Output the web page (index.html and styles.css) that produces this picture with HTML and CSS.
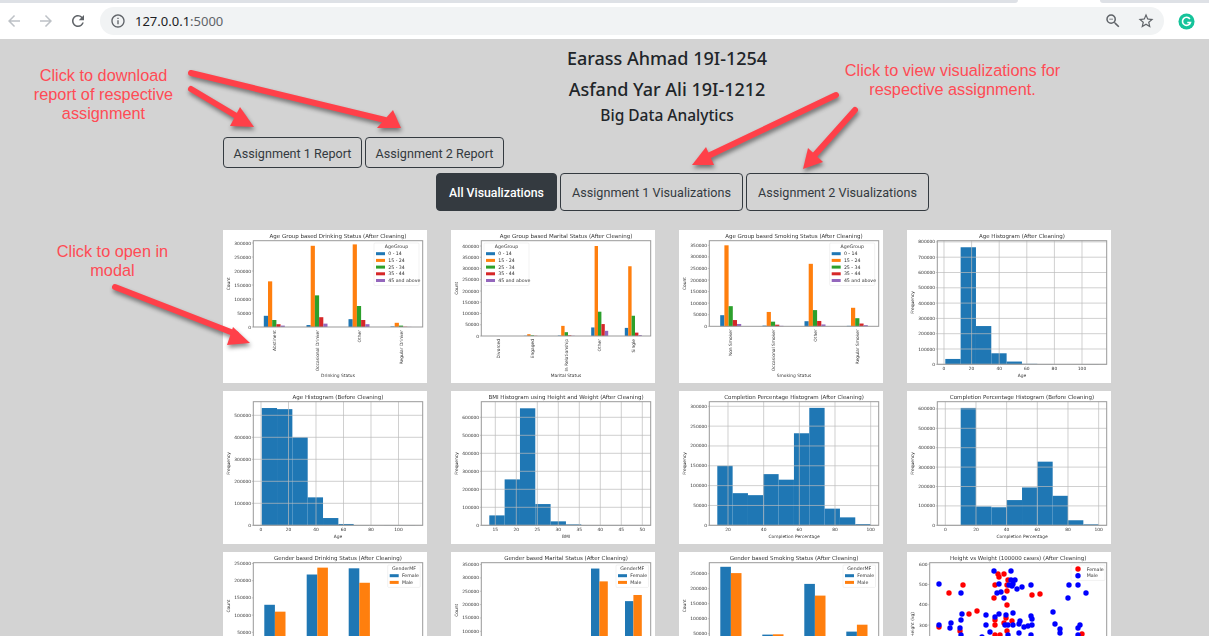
FILE: index.html
```html
<!DOCTYPE html>
<html lang="en">
<head>
    <meta charset="UTF-8">
    <meta name="viewport" content="width=device-width, initial-scale=1.0">
    <title>Big Data Analytics</title>
    <link rel="stylesheet" href="styles.css">
</head>
<body>
    <div class="tab-strip">
        <div class="tab-gap"></div>
        <div class="tab-open"></div>
        <div class="tab-rest"></div>
    </div>
    <div class="toolbar">
        <svg class="tool-icon faded" viewBox="0 0 24 24"><path d="M20 11H7.83l5.59-5.59L12 4l-8 8 8 8 1.41-1.41L7.83 13H20v-2z"/></svg>
        <svg class="tool-icon faded" viewBox="0 0 24 24"><path d="M4 11h12.17l-5.59-5.59L12 4l8 8-8 8-1.41-1.41L16.17 13H4v-2z"/></svg>
        <svg class="tool-icon" viewBox="0 0 24 24"><path d="M17.65 6.35A7.958 7.958 0 0 0 12 4c-4.42 0-7.99 3.58-7.99 8s3.57 8 7.99 8c3.73 0 6.84-2.55 7.73-6h-2.08A5.99 5.99 0 0 1 12 18c-3.31 0-6-2.69-6-6s2.69-6 6-6c1.66 0 3.14.69 4.22 1.78L13 11h7V4l-2.35 2.35z"/></svg>
        <div class="omnibox">
            <svg class="info-icon" viewBox="0 0 24 24"><path d="M11 7h2v2h-2zm0 4h2v6h-2zm1-9C6.48 2 2 6.48 2 12s4.48 10 10 10 10-4.48 10-10S17.52 2 12 2zm0 18c-4.41 0-8-3.59-8-8s3.59-8 8-8 8 3.59 8 8-3.59 8-8 8z"/></svg>
            <span class="url">127.0.0.1<span class="url-port">:5000</span></span>
            <svg class="tool-icon" viewBox="0 0 24 24"><path d="M15.5 14h-.79l-.28-.27A6.471 6.471 0 0 0 16 9.5 6.5 6.5 0 1 0 9.5 16c1.61 0 3.09-.59 4.23-1.57l.27.28v.79l5 4.99L20.49 19l-4.99-5zm-6 0C7.01 14 5 11.99 5 9.5S7.01 5 9.5 5 14 7.01 14 9.5 11.99 14 9.5 14zM7 9h5v1H7z"/></svg>
            <svg class="tool-icon" viewBox="0 0 24 24"><path d="M22 9.24l-7.19-.62L12 2 9.19 8.63 2 9.24l5.46 4.73L5.82 21 12 17.27 18.18 21l-1.63-7.03L22 9.24zM12 15.4l-3.76 2.27 1-4.28-3.32-2.88 4.38-.38L12 6.1l1.71 4.04 4.38.38-3.32 2.88 1 4.28L12 15.4z"/></svg>
        </div>
        <svg class="grammarly" viewBox="0 0 18 18">
            <circle cx="9" cy="9" r="8.5" fill="#15c39a"/>
            <path d="M12.6 6.4A4.3 4.3 0 1 0 13.2 10H9.8" fill="none" stroke="#fff" stroke-width="1.7"/>
        </svg>
    </div>

    <div class="page">
        <h2 class="name">Earass Ahmad 19I-1254</h2>
        <h2 class="name">Asfand Yar Ali 19I-1212</h2>
        <h3 class="course">Big Data Analytics</h3>

        <div class="btn-row">
            <button class="btn">Assignment 1 Report</button>
            <button class="btn">Assignment 2 Report</button>
        </div>
        <div class="btn-row tabs">
            <button class="btn tab active">All Visualizations</button>
            <button class="btn tab">Assignment 1 Visualizations</button>
            <button class="btn tab">Assignment 2 Visualizations</button>
        </div>

        <div id="gallery" class="gallery"></div>
    </div>

    <!-- annotations drawn on top of the screenshot -->
    <div class="note note-download">Click to download<br>report of respective<br>assignment</div>
    <div class="note note-view">Click to view visualizations for<br>respective assignment.</div>
    <div class="note note-modal">Click to open in<br>modal</div>
    <svg class="arrows" viewBox="0 0 1209 636">
        <path d="M191 73 L385 120" class="shaft"/>
        <polygon points="401,128 393,110 377,128"/>
        <path d="M191 89 L238 117" class="shaft"/>
        <polygon points="254,127 240,107 230,126"/>
        <path d="M836 95 L706 157" class="shaft"/>
        <polygon points="692,165 706,147 714,165"/>
        <path d="M855 110 L813 157" class="shaft"/>
        <polygon points="803,169 808,148 823,162"/>
        <path d="M115 287 L236 334" class="shaft"/>
        <polygon points="250,343 233,327 227,345"/>
    </svg>

    <script src="charts.js"></script>
</body>
</html>
```
FILE: styles.css
```css
html, body {
    margin: 0;
    height: 100%;
    overflow: hidden;
}
body {
    position: relative;
    background-color: #d3d3d3;
    font-family: "Noto Sans", sans-serif;
    color: #212529;
}

/* browser chrome */
.tab-strip {
    display: flex;
    height: 3px;
    background-color: #fff;
}
.tab-gap {
    width: 1018px;
    background-color: #dee1e6;
    border-bottom-right-radius: 3px;
}
.tab-open {
    width: 82px;
}
.tab-rest {
    flex: 1;
    background-color: #dee1e6;
    border-bottom-left-radius: 3px;
}
.toolbar {
    display: flex;
    align-items: center;
    gap: 14px;
    height: 36px;
    padding-left: 5px;
    background-color: #fff;
}
.tool-icon {
    width: 18px;
    height: 18px;
    fill: #5f6368;
    flex: none;
}
.tool-icon.faded {
    fill: #bdc1c6;
}
.omnibox {
    display: flex;
    align-items: center;
    gap: 15px;
    width: 1064px;
    height: 28px;
    margin-left: -1px;
    padding: 0 9px 0 10px;
    box-sizing: border-box;
    background-color: #f1f3f4;
    border-radius: 14px;
}
.info-icon {
    width: 16px;
    height: 16px;
    fill: #5f6368;
    flex: none;
    margin-right: -6px;
}
.url {
    flex: 1;
    font-size: 13px;
    color: #202124;
}
.url-port {
    color: #5f6368;
}
.grammarly {
    width: 17px;
    height: 17px;
    margin-left: 0;
    flex: none;
}

/* page */
.page {
    width: 888px;
    margin-left: 223px;
    padding-top: 4px;
}
.name {
    margin: 0;
    font-size: 18px;
    font-weight: 500;
    line-height: 31px;
    text-align: center;
}
.course {
    margin: 0;
    font-size: 15.5px;
    font-weight: 500;
    line-height: 20px;
    text-align: center;
}
.btn-row {
    display: flex;
    gap: 3px;
    margin-top: 12px;
}
.btn-row.tabs {
    margin-top: 5px;
    padding-left: 213px;
}
.btn {
    height: 31px;
    width: 139px;
    padding: 1px 0 0;
    font-family: Roboto, sans-serif;
    font-size: 12.6px;
    color: #343a40;
    background-color: transparent;
    border: 1px solid #343a40;
    border-radius: 4px;
}
.tab {
    height: 38px;
    width: 183px;
}
.tab.active {
    width: 121px;
    font-size: 12.3px;
    font-weight: 500;
    color: #fff;
    background-color: #343a40;
}
.gallery {
    display: grid;
    grid-template-columns: repeat(4, 204px);
    grid-auto-rows: 153px;
    gap: 8px 24px;
    margin-top: 19px;
}
.plot {
    background-color: #fff;
}
.plot svg {
    display: block;
    width: 204px;
    height: 153px;
    filter: blur(0.5px);
}
.plot text {
    font-family: "DejaVu Sans", sans-serif;
    font-size: 4.4px;
    fill: #333;
}
.plot .plot-title {
    font-size: 5.5px;
}
.plot .legend-text {
    font-size: 4.7px;
}
.plot .frame {
    fill: none;
    stroke: #999;
    stroke-width: 1;
}
.plot .grid {
    stroke: #bbb;
    stroke-width: 0.7;
}
.plot .tick {
    stroke: #777;
    stroke-width: 0.4;
}
.plot .legend-box {
    fill: #fff;
    stroke: #e4e4e4;
    stroke-width: 0.5;
}

/* annotations */
.note {
    position: absolute;
    font-family: "Liberation Sans", Arial, sans-serif;
    font-size: 16.3px;
    line-height: 19px;
    color: #ff4b55;
    text-align: center;
}
.note-download {
    left: 3.5px;
    top: 66px;
    width: 200px;
}
.note-view {
    left: 802.5px;
    top: 61px;
    width: 300px;
}
.note-modal {
    left: 32.5px;
    top: 242px;
    width: 160px;
}
.arrows {
    position: absolute;
    left: 0;
    top: 0;
    width: 1209px;
    height: 636px;
    fill: #ff4049;
    filter: drop-shadow(1px 3px 2px rgba(0, 0, 0, 0.45));
    pointer-events: none;
}
.shaft {
    fill: none;
    stroke: #ff4049;
    stroke-width: 6;
    stroke-linecap: round;
}
```
FILE: charts.js
```js
const BLUE = "#1f77b4";
const ORANGE = "#ff7f0e";
const SERIES = [BLUE, ORANGE, "#2ca02c", "#d62728", "#9467bd"];
const AGE_LEGEND = ["0 - 14", "15 - 24", "25 - 34", "35 - 44", "45 and above"];
const GENDER_LEGEND = ["Female", "Male"];

// values are in thousands, scale is pixels per 100k
function grouped(title, xlabel, labels, opts) {
    return Object.assign({ title, xlabel, ylabel: "Count", labels, left: 30.3 }, opts);
}

function hist(title, xlabel, opts) {
    return Object.assign({ title, xlabel, ylabel: "Frequency", left: 30.3, bottom: 134.3, grid: true }, opts);
}

const charts = [
    grouped("Age Group based Drinking Status (After Cleaning)", "Drinking Status",
        ["Abstinent", "Occasional Drinker", "Other", "Regular Drinker"], {
        bottom: 97, scale: 28, step: 50, max: 300, centers: [51.3, 94, 136, 178], barW: 4.2,
        groups: [[40, 163, 25, 10, 5], [7, 290, 113, 35, 12], [28, 295, 75, 25, 10], [2, 15, 5, 1, 0.5]],
        legend: { x: 151, title: "AgeGroup", items: AGE_LEGEND }
    }),
    grouped("Age Group based Marital Status (After Cleaning)", "Marital Status",
        ["Divorced", "Engaged", "In Relationship", "Other", "Single"], {
        bottom: 106, scale: 22.5, step: 50, max: 400, centers: [47.3, 81.3, 115.3, 148.7, 182.3], barW: 3.4,
        groups: [[0, 0, 0, 0, 0], [1, 8, 3, 1, 0], [2, 45, 17, 3, 1], [38, 400, 108, 53, 23], [36, 310, 90, 15, 4]],
        legend: { x: 33, title: "AgeGroup", items: AGE_LEGEND }
    }),
    grouped("Age Group based Smoking Status (After Cleaning)", "Smoking Status",
        ["Non Smoker", "Occasional Smoker", "Other", "Regular Smoker"], {
        bottom: 96.3, scale: 23.14, step: 50, max: 350, centers: [51.7, 94, 136, 178.3], barW: 4.2,
        groups: [[48, 350, 87, 27, 10], [3, 62, 20, 7, 2], [22, 270, 70, 23, 8], [2, 80, 35, 12, 5]],
        legend: { x: 150.7, title: "AgeGroup", items: AGE_LEGEND }
    }),
    hist("Age Histogram (After Cleaning)", "Age", {
        scale: 15.3, step: 100, max: 800, start: 38.3, bins: [35, 765, 250, 72, 18, 3, 1, 0, 0, 1],
        xticks: { x0: 37, dx: 27.6, first: 0, inc: 20, count: 6 }
    }),
    hist("Age Histogram (Before Cleaning)", "Age", {
        scale: 22, step: 100, max: 500, start: 38.7, bins: [533, 528, 400, 127, 33, 6, 1, 0, 1, 1],
        xticks: { x0: 38, dx: 27.5, first: 0, inc: 20, count: 6 }
    }),
    hist("BMI Histogram using Height and Weight (After Cleaning)", "BMI", {
        scale: 18, step: 100, max: 600, start: 38.3, bins: [55, 255, 650, 118, 22, 5, 1, 1, 1, 0.5],
        xticks: { x0: 44.3, dx: 21, first: 15, inc: 5, count: 8 }
    }),
    hist("Completion Percentage Histogram (After Cleaning)", "Completion Percentage", {
        scale: 39.67, step: 50, max: 300, start: 38.3, bins: [150, 81, 76, 129, 115, 232, 296, 42, 20, 3],
        xticks: { x0: 49, dx: 35.67, first: 20, inc: 20, count: 5 }
    }),
    hist("Completion Percentage Histogram (Before Cleaning)", "Completion Percentage", {
        scale: 19.4, step: 100, max: 600, start: 53.7, bins: [605, 97, 93, 130, 195, 328, 152, 26, 5],
        xticks: { x0: 38.3, dx: 30.67, first: 0, inc: 20, count: 6 }
    }),
    grouped("Gender based Drinking Status (After Cleaning)", "Drinking Status",
        ["Abstinent", "Occasional Drinker", "Other", "Regular Drinker"], {
        bottom: 97.5, scale: 34.4, step: 50, max: 250, centers: [51.9, 94.3, 136.3, 178.6], barW: 10.6,
        groups: [[130, 110], [218, 238], [236, 194], [8, 12]],
        legend: { x: 164.7, title: "GenderMF", items: GENDER_LEGEND }
    }),
    grouped("Gender based Marital Status (After Cleaning)", "Marital Status",
        ["Divorced", "Engaged", "In Relationship", "Other", "Single"], {
        bottom: 106, scale: 26.7, step: 50, max: 350, centers: [46.4, 80.4, 114.4, 148.4, 182.4], barW: 8.4,
        groups: [[1, 1], [5, 8], [35, 30], [335, 287], [213, 236]],
        legend: { x: 165, title: "GenderMF", items: GENDER_LEGEND }
    }),
    grouped("Gender based Smoking Status (After Cleaning)", "Smoking Status",
        ["Non Smoker", "Occasional Smoker", "Other", "Regular Smoker"], {
        bottom: 96.7, scale: 30, step: 50, max: 250, centers: [51.9, 93.9, 135.9, 177.9], barW: 10.6,
        groups: [[273, 252], [47, 48], [216, 177], [57, 80]],
        legend: { x: 164, title: "GenderMF", items: GENDER_LEGEND }
    }),
    {
        title: "Height vs Weight (100000 cases) (After Cleaning)", xlabel: "Weight (kg)", ylabel: "Height (kg)",
        left: 22.7, bottom: 134, scale: 20.3, step: 100, max: 600, unit: 1,
        // pixel positions of the dots, [x, y]
        blue: [[87, 19], [104, 19], [32, 32], [92, 32], [54, 41], [124, 33], [104, 28], [108, 28], [102, 33], [106, 32], [110, 37], [115, 35], [162, 33], [171, 33], [179, 41], [161, 46], [90, 41], [94, 40], [97, 46], [105, 34], [55, 62], [79, 63], [92, 62], [99, 63], [106, 61], [146, 60], [124, 64], [125, 67], [88, 65], [54, 68], [44, 71], [32, 73], [43, 76], [53, 76], [79, 73], [98, 73], [101, 73], [106, 73], [113, 69], [112, 72], [117, 75], [121, 74], [125, 73], [148, 72], [153, 77], [173, 73], [171, 76], [153, 81], [83, 80], [54, 83], [75, 85], [112, 81], [101, 83], [124, 83], [171, 83]],
        red: [[91, 22], [97, 22], [92, 25], [101, 28], [88, 33], [100, 33], [56, 33], [42, 41], [100, 39], [87, 46], [125, 43], [133, 42], [100, 53], [70, 59], [62, 62], [99, 66], [88, 68], [88, 73], [97, 71], [105, 69], [32, 75], [53, 79], [100, 79], [88, 83], [93, 83], [175, 82]],
        legend: { x: 164, y: 13, title: "", items: GENDER_LEGEND, dots: true }
    }
];

const FRAME_TOP = 10.7;
const FRAME_RIGHT = 199.7;
const DOT_R = 2.7;

function rect(x, y, w, h, fill) {
    return `<rect x="${x}" y="${y}" width="${w}" height="${h}" fill="${fill}"/>`;
}

function legendMarkup(lg) {
    let top = 13;
    let rowY = lg.title ? 23.7 : 17;
    const w = lg.dots ? 34 : (lg.items.length > 2 ? 45 : 32.5);
    const h = (lg.title ? 7 : 0) + lg.items.length * 6.7 + 2;
    let out = `<rect class="legend-box" x="${lg.x}" y="${top}" width="${w}" height="${h}" rx="1"/>`;
    if (lg.title) {
        out += `<text class="legend-text" x="${lg.x + w / 2}" y="18.4" text-anchor="middle">${lg.title}</text>`;
    }
    lg.items.forEach((item, i) => {
        const y = rowY + i * 6.7;
        if (lg.dots) {
            out += `<circle cx="${lg.x + 7}" cy="${y}" r="${DOT_R}" fill="${i === 0 ? "#f00" : "#00f"}"/>`;
        } else {
            out += rect(lg.x + 2, y - 1.5, 9, 3, SERIES[i]);
        }
        out += `<text class="legend-text" x="${lg.x + (lg.dots ? 15.7 : 14.2)}" y="${y + 1.5}">${item}</text>`;
    });
    return out;
}

function drawChart(c) {
    const right = FRAME_RIGHT;
    const unit = c.unit || 1000;
    const midX = (c.left + right) / 2;
    let back = "";
    let marks = "";
    let grid = "";
    let labels = "";

    for (let v = 0; v <= c.max; v += c.step) {
        const y = c.bottom - v * c.scale / 100;
        labels += `<text x="${c.left - 2.2}" y="${y + 1.5}" text-anchor="end">${v * unit}</text>`;
        back += `<line class="tick" x1="${c.left - 1.5}" x2="${c.left}" y1="${y}" y2="${y}"/>`;
        if (c.grid) {
            grid += `<line class="grid" x1="${c.left}" x2="${right}" y1="${y}" y2="${y}"/>`;
        }
    }

    if (c.xticks) {
        const t = c.xticks;
        for (let i = 0; i < t.count; i++) {
            const x = t.x0 + i * t.dx;
            grid += `<line class="grid" x1="${x}" x2="${x}" y1="${FRAME_TOP}" y2="${c.bottom}"/>`;
            labels += `<text x="${x}" y="${c.bottom + 6}" text-anchor="middle">${t.first + i * t.inc}</text>`;
        }
    }

    if (c.bins) {
        c.bins.forEach((val, i) => {
            const h = val * c.scale / 100;
            marks += rect(c.start + i * 15.33, c.bottom - h, 15.33, h, BLUE);
        });
    }

    if (c.groups) {
        c.groups.forEach((group, g) => {
            const x0 = c.centers[g] - group.length * c.barW / 2;
            group.forEach((val, s) => {
                const h = val * c.scale / 100;
                marks += rect(x0 + s * c.barW, c.bottom - h, c.barW, h, SERIES[s]);
            });
            const cx = c.centers[g];
            labels += `<text transform="translate(${cx + 1.5} ${c.bottom + 3}) rotate(-90)" text-anchor="end">${c.labels[g]}</text>`;
        });
    }

    if (c.red) {
        c.red.forEach(p => { marks += `<circle cx="${p[0]}" cy="${p[1]}" r="${DOT_R}" fill="#f00"/>`; });
        c.blue.forEach(p => { marks += `<circle cx="${p[0]}" cy="${p[1]}" r="${DOT_R}" fill="#00f"/>`; });
    }

    const xlabelY = 147.2;
    const height = c.bottom - FRAME_TOP;
    return `<svg viewBox="0 0 204 153">
        <text class="plot-title" x="${midX}" y="7.6" text-anchor="middle">${c.title}</text>
        ${back}${marks}${grid}
        <rect class="frame" x="${c.left}" y="${FRAME_TOP}" width="${right - c.left}" height="${height}"/>
        ${c.legend ? legendMarkup(c.legend) : ""}
        ${labels}
        <text x="${midX}" y="${xlabelY}" text-anchor="middle">${c.xlabel}</text>
        <text transform="translate(6.5 ${(c.bottom + FRAME_TOP) / 2}) rotate(-90)" text-anchor="middle">${c.ylabel}</text>
    </svg>`;
}

const gallery = document.getElementById("gallery");
charts.forEach(c => {
    const plot = document.createElement("div");
    plot.classList.add("plot");
    plot.innerHTML = drawChart(c);
    gallery.appendChild(plot);
});
```
